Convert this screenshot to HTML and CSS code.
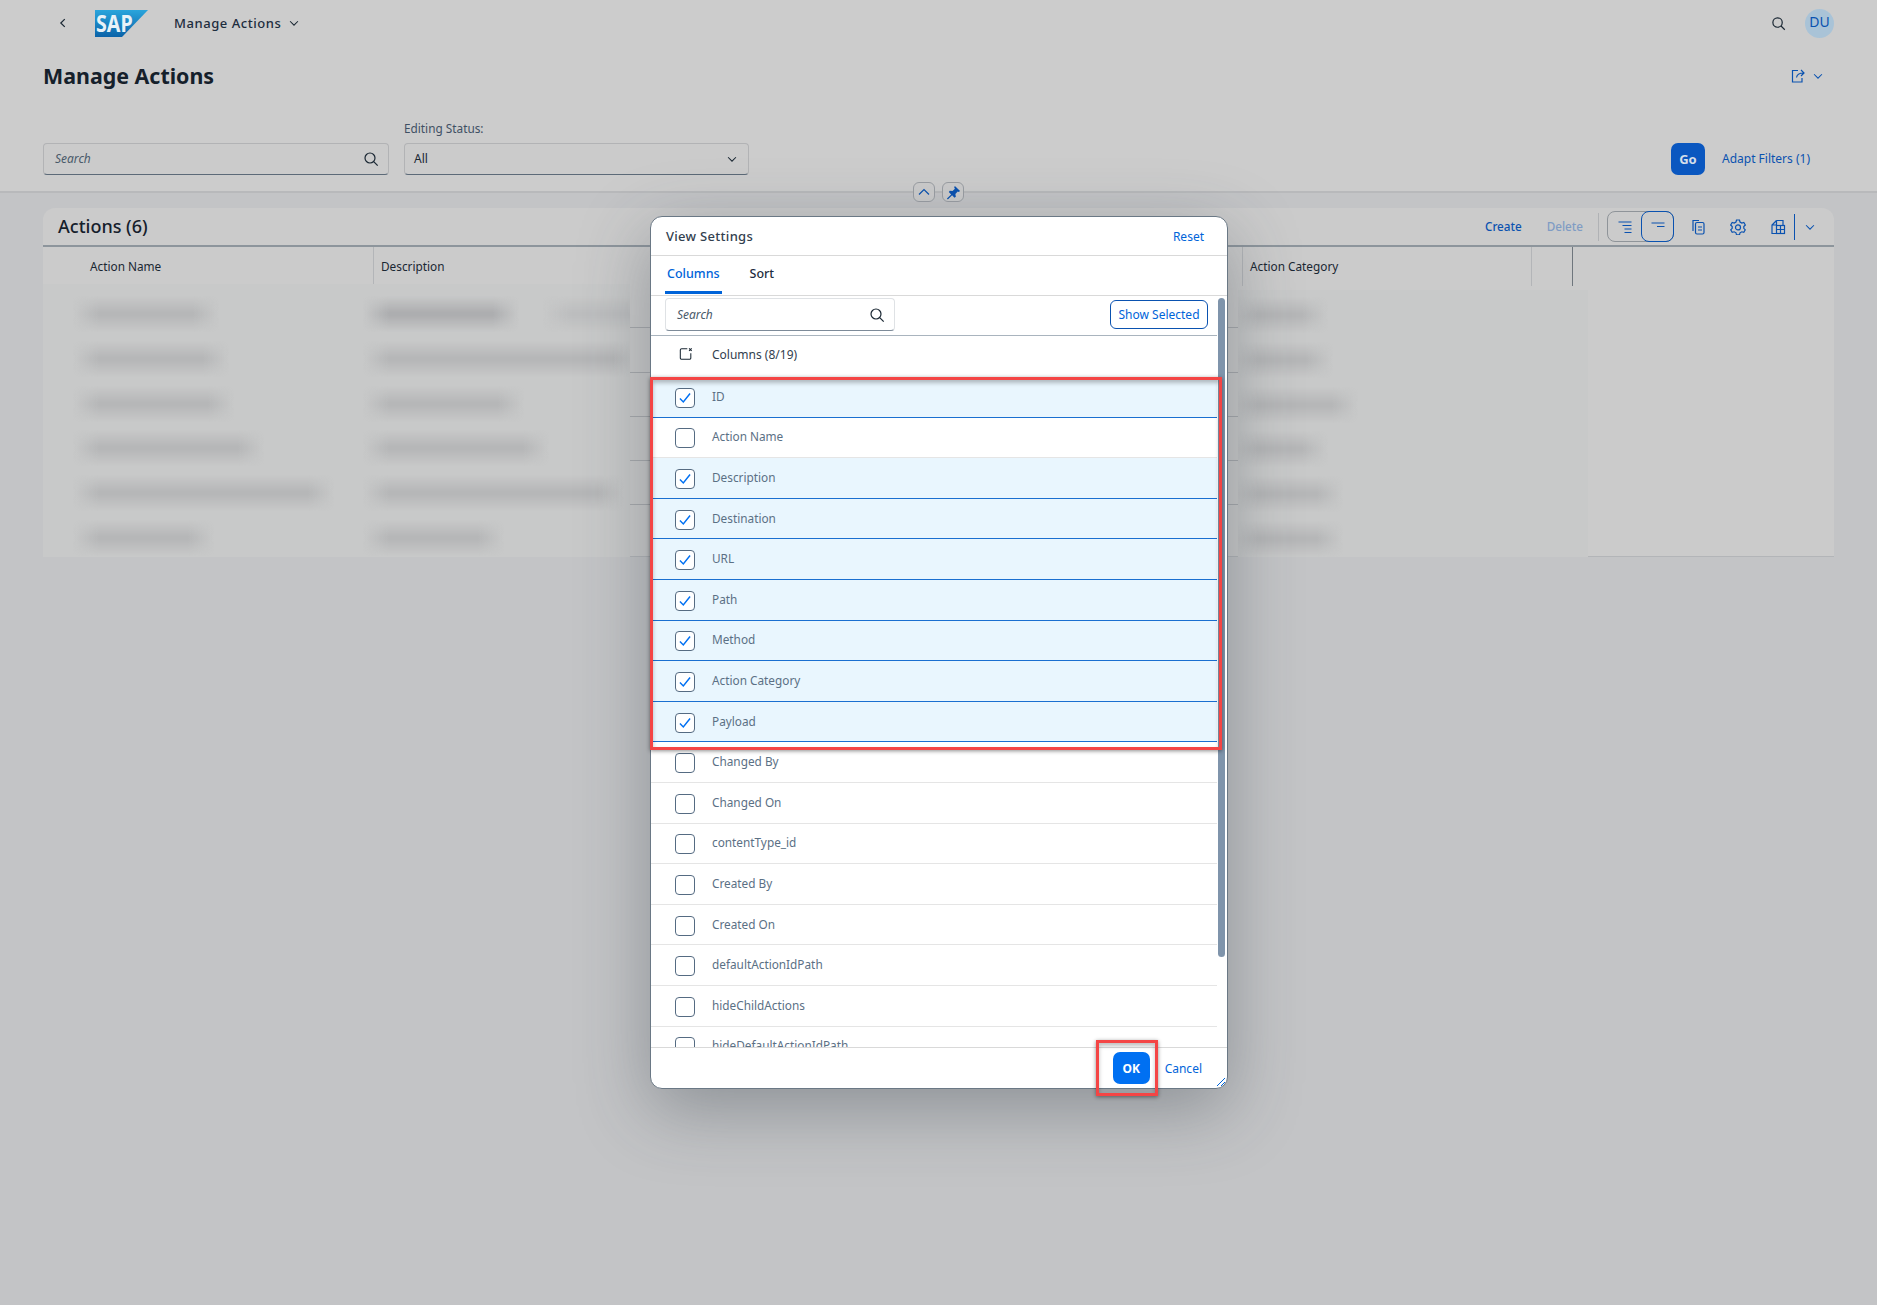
FILE: index.html
```html
<!DOCTYPE html>
<html lang="en">
<head>
  <meta charset="UTF-8" />
  <meta name="viewport" content="width=device-width, initial-scale=1.0" />
  <title>Manage Actions</title>
  <link rel="stylesheet" href="styles.css">
</head>
<body>
  <header class="page-header">
    <div class="shell">
      <svg class="icon back" viewBox="0 0 16 16"><path d="M10 3.500 5.500 8l4.500 4.500"/></svg>
      <svg class="logo" viewBox="0 0 53 27">
        <defs>
          <linearGradient id="sapblue" x1="0" y1="0" x2="0" y2="1">
            <stop offset="0" stop-color="#2aa5dc"/>
            <stop offset="1" stop-color="#0a62a8"/>
          </linearGradient>
        </defs>
        <polygon points="0,0 53,0 27,27 0,27" fill="url(#sapblue)"/>
        <text class="logo-text" transform="translate(1 22) scale(.82 1)">SAP</text>
      </svg>
      <span class="shell-title">Manage Actions</span>
      <svg class="icon chevron" viewBox="0 0 16 16"><path d="M3.500 6 8 10.500 12.500 6"/></svg>
      <span class="spacer"></span>
      <svg class="icon shell-search" viewBox="0 0 16 16"><circle cx="7" cy="7" r="5"/><path d="m10.700 10.700 4 4"/></svg>
      <span class="avatar">DU</span>
    </div>

    <div class="title-row">
      <h1>Manage Actions</h1>
      <span class="spacer"></span>
      <svg class="icon blue share" viewBox="0 0 16 16"><path d="M8 2.500H2.500v11.500h9.500V10"/><path d="M6.500 9.500C7 6.500 9 5 13.500 5M11 2l3 3-3 3"/></svg>
      <svg class="icon blue chevron" viewBox="0 0 16 16"><path d="M3.500 6 8 10.500 12.500 6"/></svg>
    </div>

    <div class="filter-bar">
      <div class="input search-filter">
        <span class="placeholder">Search</span>
        <svg class="icon" viewBox="0 0 16 16"><circle cx="7" cy="7" r="5"/><path d="m10.700 10.700 4 4"/></svg>
      </div>
      <div class="field">
        <label>Editing Status:</label>
        <div class="input">
          <span class="value">All</span>
          <svg class="icon chevron" viewBox="0 0 16 16"><path d="M3.500 6 8 10.500 12.500 6"/></svg>
        </div>
      </div>
      <span class="spacer"></span>
      <button class="go">Go</button>
      <span class="adapt">Adapt Filters (1)</span>
    </div>

    <div class="collapse-btns">
      <span class="round-btn"><svg class="icon blue" viewBox="0 0 16 16"><path d="M3 10.500 8 5.500l5 5"/></svg></span>
      <span class="round-btn"><svg class="pin" viewBox="0 0 16 16"><path d="M9.500 1 15 6.500l-1.500 1-1-.5-2.500 2.500.5 3-1.500 1-2.500-2.500L2 15.500l-1-1 4.500-4.500L3 7.500l1-1.500 3 .5L9.500 4l-.8-1.500z"/></svg></span>
    </div>
  </header>

  <main class="card">
    <div class="toolbar">
      <h2>Actions (6)</h2>
      <span class="spacer"></span>
      <span class="tool-link">Create</span>
      <span class="tool-link disabled">Delete</span>
      <span class="tool-sep"></span>
      <div class="segmented">
        <span class="seg"><svg class="icon blue" viewBox="0 0 16 16"><path d="M1.500 3h13M5.500 6.500h9M7.500 10h7M7.500 13.500h7"/></svg></span>
        <span class="seg active"><svg class="icon blue" viewBox="0 0 16 16"><path d="M1.500 4h13M7 7.500h7.500"/></svg></span>
      </div>
      <svg class="icon blue tool-icon copy" viewBox="0 0 16 16"><path d="M3 12V1.500h6"/><rect x="5.500" y="3.500" width="8.500" height="11.500" rx="1.500"/><path d="M8 8h4M8 11h4"/></svg>
      <svg class="icon blue tool-icon gear" viewBox="0 0 16 16"><path d="M6.500 1h3l.5 2 1.800 1 2-.6 1.500 2.600-1.500 1.500v1.800l1.500 1.500-1.500 2.600-2-.6-1.800 1-.5 2h-3l-.5-2-1.800-1-2 .6L.7 10.800l1.500-1.500V7.500L.7 6l1.500-2.600 2 .6L6 3z"/><circle cx="8" cy="8.400" r="2.500"/></svg>
      <svg class="icon blue tool-icon export" viewBox="0 0 16 16"><path d="M6.500 1.500h6.500v5M6.500 1.500 2 6v8.500h4.500M2 6h4.500V1.500"/><rect x="6.500" y="6.500" width="8" height="8"/><path d="M10.500 6.500v8M6.500 10.500h8"/></svg>
      <span class="tool-bar"></span>
      <svg class="icon blue chevron" viewBox="0 0 16 16"><path d="M3.500 6 8 10.500 12.500 6"/></svg>
    </div>

    <div class="table-head">
      <div class="th first">Action Name</div>
      <div class="th">Description</div>
      <div class="th">Action Category</div>
      <div class="th"></div>
    </div>

    <div class="table-body">
      <div class="row"></div>
      <div class="row"></div>
      <div class="row"></div>
      <div class="row"></div>
      <div class="row"></div>
      <div class="row"></div>
    </div>

    <div class="blur-patch left">
      <div class="blur-row"><i class="bar w110"></i><i class="bar dark w120"></i><i class="bar tail"></i></div>
      <div class="blur-row"><i class="bar w120"></i><i class="bar w240"></i></div>
      <div class="blur-row"><i class="bar w125"></i><i class="bar w125"></i></div>
      <div class="blur-row"><i class="bar w155"></i><i class="bar w150"></i></div>
      <div class="blur-row"><i class="bar w225"></i><i class="bar w225"></i></div>
      <div class="blur-row"><i class="bar w105"></i><i class="bar w105"></i></div>
    </div>
    <div class="blur-patch right">
      <div class="blur-row"><i class="bar w60"></i></div>
      <div class="blur-row"><i class="bar w65"></i></div>
      <div class="blur-row"><i class="bar w90"></i></div>
      <div class="blur-row"><i class="bar w60"></i></div>
      <div class="blur-row"><i class="bar w75"></i></div>
      <div class="blur-row"><i class="bar w75"></i></div>
    </div>
  </main>

  <section class="dialog">
    <div class="dialog-head">
      <span class="dialog-title">View Settings</span>
      <span class="link">Reset</span>
    </div>
    <div class="tabs">
      <span class="tab active">Columns</span>
      <span class="tab">Sort</span>
    </div>
    <div class="dialog-body">
      <div class="list-area">
        <div class="search-row">
          <div class="input white">
            <span class="placeholder">Search</span>
            <svg class="icon" viewBox="0 0 16 16"><circle cx="7" cy="7" r="5"/><path d="m10.700 10.700 4 4"/></svg>
          </div>
          <span class="spacer"></span>
          <button class="show-selected">Show Selected</button>
        </div>
        <div class="list-head">
          <svg class="icon select-all" viewBox="0 0 16 16"><path d="M9.500 2H3a1.500 1.500 0 0 0-1.500 1.500v9A1.500 1.500 0 0 0 3 14h9a1.500 1.500 0 0 0 1.500-1.500V7"/><path d="m11.500 1.500 3 3m0-3-3 3"/></svg>
          <span>Columns (8/19)</span>
        </div>
        <ul class="list">
          <li class="item on"><span class="box"><svg viewBox="0 0 16 16"><path d="m3.500 8.500 3 3 6-7.500"/></svg></span><span class="item-label">ID</span></li>
          <li class="item"><span class="box"></span><span class="item-label">Action Name</span></li>
          <li class="item on"><span class="box"><svg viewBox="0 0 16 16"><path d="m3.500 8.500 3 3 6-7.500"/></svg></span><span class="item-label">Description</span></li>
          <li class="item on"><span class="box"><svg viewBox="0 0 16 16"><path d="m3.500 8.500 3 3 6-7.500"/></svg></span><span class="item-label">Destination</span></li>
          <li class="item on"><span class="box"><svg viewBox="0 0 16 16"><path d="m3.500 8.500 3 3 6-7.500"/></svg></span><span class="item-label">URL</span></li>
          <li class="item on"><span class="box"><svg viewBox="0 0 16 16"><path d="m3.500 8.500 3 3 6-7.500"/></svg></span><span class="item-label">Path</span></li>
          <li class="item on"><span class="box"><svg viewBox="0 0 16 16"><path d="m3.500 8.500 3 3 6-7.500"/></svg></span><span class="item-label">Method</span></li>
          <li class="item on"><span class="box"><svg viewBox="0 0 16 16"><path d="m3.500 8.500 3 3 6-7.500"/></svg></span><span class="item-label">Action Category</span></li>
          <li class="item on"><span class="box"><svg viewBox="0 0 16 16"><path d="m3.500 8.500 3 3 6-7.500"/></svg></span><span class="item-label">Payload</span></li>
          <li class="item"><span class="box"></span><span class="item-label">Changed By</span></li>
          <li class="item"><span class="box"></span><span class="item-label">Changed On</span></li>
          <li class="item"><span class="box"></span><span class="item-label">contentType_id</span></li>
          <li class="item"><span class="box"></span><span class="item-label">Created By</span></li>
          <li class="item"><span class="box"></span><span class="item-label">Created On</span></li>
          <li class="item"><span class="box"></span><span class="item-label">defaultActionIdPath</span></li>
          <li class="item"><span class="box"></span><span class="item-label">hideChildActions</span></li>
          <li class="item"><span class="box"></span><span class="item-label">hideDefaultActionIdPath</span></li>
        </ul>
      </div>
      <div class="scrollbar"><span class="thumb"></span></div>
    </div>
    <div class="dialog-foot">
      <button class="ok">OK</button>
      <span class="link">Cancel</span>
      <svg class="grip" viewBox="0 0 10 10"><path d="M1 9 9 1M5 9l4-4"/></svg>
    </div>
    <div class="mark mark-list"></div>
    <div class="mark mark-ok"></div>
  </section>
</body>
</html>
```

FILE: styles.css
```css
* {
  box-sizing: border-box;
}

body {
  margin: 0;
  height: 1305px;
  overflow: hidden;
  position: relative;
  font-family: "Noto Sans", Arial, sans-serif;
  font-size: 13px;
  color: #1a2733;
  background-color: #c3c4c6;
}

h1, h2, ul {
  margin: 0;
  padding: 0;
}

button {
  font-family: inherit;
  border: none;
  padding: 0;
}

.spacer {
  flex: 1;
}

.icon {
  width: 16px;
  height: 16px;
  flex: none;
  fill: none;
  stroke: #1a2733;
  stroke-width: 1.2;
}

.icon.blue {
  stroke: #0a52b0;
}

.chevron {
  width: 14px;
  height: 14px;
}

/* page header */
.page-header {
  position: relative;
  height: 193px;
  background-color: #cccccc;
  border-bottom: 2px solid #b8b9bb;
}

.shell {
  display: flex;
  align-items: center;
  height: 46px;
  padding: 0 43px 0 56px;
}

.back {
  width: 14px;
  height: 14px;
  stroke-width: 1.4;
}

.logo {
  width: 53px;
  height: 27px;
  margin-left: 25px;
}

.logo-text {
  font-size: 24px;
  font-weight: 700;
  fill: #e8f2f8;
}

.shell-title {
  margin-left: 26px;
  font-size: 13px;
  font-weight: 500;
  letter-spacing: 0.55px;
  color: #1d2d3e;
}

.shell-title + .chevron {
  margin-left: 6px;
}

.shell-search {
  margin-right: 19px;
  width: 15px;
  height: 15px;
  stroke-width: 1.3;
}

.avatar {
  width: 29px;
  height: 29px;
  border-radius: 50%;
  background-color: #a9c3d7;
  color: #0a52b0;
  font-size: 14px;
  text-align: center;
  line-height: 26px;
}

.title-row {
  display: flex;
  align-items: center;
  height: 60px;
  padding: 0 52px 0 43px;
}

h1 {
  margin-top: -2px;
  font-size: 21.4px;
  font-weight: 700;
  color: #15202b;
}

.share {
  margin-right: 5px;
}

.filter-bar {
  display: flex;
  align-items: flex-end;
  gap: 15px;
  height: 69px;
  padding: 0 67px 0 43px;
}

.input {
  display: flex;
  align-items: center;
  justify-content: space-between;
  width: 345px;
  height: 32px;
  padding: 0 9px 0 9px;
  background-color: #cbcbcb;
  border: 1px solid #b2b3b5;
  border-bottom: 1.5px solid #5c6a78;
  border-radius: 4px;
}

.input.search-filter {
  width: 346px;
  padding-left: 11px;
}

.placeholder {
  font-size: 12px;
  font-style: italic;
  color: #4a5a6a;
}

.value {
  font-size: 12px;
}

.filter-bar .placeholder,
.filter-bar .value {
  margin-top: -2px;
}

.field label {
  display: block;
  margin-bottom: 7px;
  font-size: 11.8px;
  color: #3f5064;
}

.go {
  width: 34px;
  height: 32px;
  margin-left: auto;
  padding-bottom: 1px;
  border-radius: 7px;
  background-color: #0a57c0;
  color: #d5dfea;
  font-size: 13px;
  font-weight: 700;
}

.adapt {
  line-height: 30px;
  margin: 0 0 1px 2px;
  font-size: 12px;
  color: #0a52b0;
}

.collapse-btns {
  position: absolute;
  left: 913px;
  top: 182px;
  display: flex;
  gap: 7px;
}

.round-btn {
  display: flex;
  align-items: center;
  justify-content: center;
  width: 22px;
  height: 20px;
  background-color: #cbcbcb;
  border: 1px solid #9a9ea3;
  border-radius: 6px;
}

.pin {
  width: 15px;
  height: 15px;
  fill: #0a52b0;
}

/* table card */
.card {
  position: relative;
  height: 349px;
  margin: 15px 43px 0;
  background-color: #cbcbcb;
  border-radius: 12px 12px 0 0;
  border-bottom: 1px solid #b3b5b8;
}

.toolbar {
  display: flex;
  align-items: center;
  height: 39px;
  padding: 0 17px 0 15px;
  border-bottom: 2px solid #8d959c;
}

h2 {
  margin-top: -2px;
  font-size: 18px;
  font-weight: 500;
  color: #15202b;
}

.tool-link {
  margin: -2px 0 0 25px;
  font-size: 11.7px;
  font-weight: 500;
  color: #0a52b0;
}

.tool-link.disabled {
  color: #7f9cc4;
}

.tool-sep {
  width: 1px;
  height: 28px;
  margin: 0 8px 0 15px;
  background-color: #b0b2b5;
}

.segmented {
  display: flex;
  width: 67px;
  height: 31px;
  margin-right: 16px;
  border: 1px solid #8f9499;
  border-radius: 8px;
}

.seg {
  display: flex;
  align-items: center;
  justify-content: center;
  flex: 1;
}

.seg.active {
  flex: none;
  width: 33px;
  margin: -1px;
  border: 1.5px solid #0a52b0;
  border-radius: 8px;
}

.tool-icon {
  margin-left: 24px;
}

.copy {
  margin-left: 0;
}

.tool-bar {
  width: 1px;
  height: 26px;
  margin: 0 8px;
  background-color: #0a52b0;
}

.table-head {
  display: grid;
  grid-template-columns: 330px 869px 289px 42px;
  width: 1530px;
  height: 37px;
}

.th {
  padding-left: 7px;
  line-height: 39px;
  font-size: 11.8px;
  color: #1a2733;
  border-left: 1px solid #b3b5b8;
}

.th.first {
  padding-left: 47px;
  border-left: none;
}

.th:last-child {
  border-right: 1px solid #6f767d;
}

.table-body {
  width: 1530px;
}

.row {
  height: 44.3px;
  border-bottom: 1px solid #a9abae;
}

.row:last-child {
  border-bottom: none;
}

.blur-patch {
  position: absolute;
  top: 76px;
  height: 273px;
  padding-top: 8px;
  overflow: hidden;
  background-color: #c8c9c9;
}

.blur-patch.left {
  left: 0;
  width: 587px;
}

.blur-patch.right {
  top: 82px;
  height: 267px;
  left: 1195px;
  width: 350px;
  padding-top: 3px;
}

.blur-row {
  display: flex;
  align-items: center;
  height: 44.7px;
}

/* smeared text in the table, soft on all four sides */
.bar {
  --smear: #b6b7b8;
  display: block;
  box-sizing: content-box;
  height: 36px;
  padding: 0 18px;
  background: linear-gradient(90deg, transparent, var(--smear) 26px, var(--smear) calc(100% - 26px), transparent);
  -webkit-mask-image: linear-gradient(180deg, transparent, #000 45%, #000 55%, transparent);
  mask-image: linear-gradient(180deg, transparent, #000 45%, #000 55%, transparent);
}

.bar.dark {
  --smear: #adaeb0;
}

.left .bar {
  margin-left: 30px;
}

.left .bar + .bar {
  position: absolute;
  left: 290px;
  margin-left: 30px;
}

.left .bar.tail {
  --smear: #bdbebf;
  left: 470px;
  width: 120px;
}

.right .bar {
  margin-left: -6px;
}

.w60 { width: 60px; }
.w65 { width: 65px; }
.w75 { width: 75px; }
.w90 { width: 90px; }
.w105 { width: 105px; }
.w110 { width: 110px; }
.w120 { width: 120px; }
.w125 { width: 125px; }
.w150 { width: 150px; }
.w155 { width: 155px; }
.w225 { width: 225px; }
.w240 { width: 240px; }

/* dialog */
.dialog {
  position: absolute;
  left: 650px;
  top: 216px;
  display: flex;
  flex-direction: column;
  width: 578px;
  height: 873px;
  background-color: #fff;
  border: 1px solid #6a7885;
  border-radius: 12px;
  box-shadow: 0 20px 70px rgba(50, 60, 70, 0.38);
}

.dialog-head {
  display: flex;
  align-items: center;
  justify-content: space-between;
  flex: none;
  height: 39px;
  padding: 0 23px 0 15px;
  border-bottom: 1px solid #d9d9d9;
}

.dialog-title {
  font-size: 13px;
  font-weight: 500;
  letter-spacing: 0.3px;
  color: #32404e;
}

.link {
  font-size: 12px;
  color: #0064d9;
}

.tabs {
  display: flex;
  flex: none;
  gap: 26px;
  height: 40px;
  padding-left: 14px;
  border-bottom: 1px solid #d9d9d9;
}

.tab {
  padding: 0 2px;
  line-height: 35px;
  font-size: 12.5px;
  font-weight: 500;
  color: #1d2d3e;
  height: 38px;
}

.tab.active {
  color: #0064d9;
  border-bottom: 3px solid #0064d9;
}

.dialog-body {
  display: flex;
  flex: 1;
  min-height: 0;
}

.list-area {
  display: flex;
  flex-direction: column;
  flex: 1;
  min-width: 0;
  overflow: hidden;
}

.search-row {
  display: flex;
  align-items: center;
  flex: none;
  height: 40px;
  padding: 0 9px 2px 14px;
  border-bottom: 1px solid #a9b4be;
}

.input.white {
  width: 230px;
  height: 33px;
  padding-left: 11px;
  background-color: #fff;
  border-color: #dfe2e5;
  border-bottom-color: #7d8b99;
}

.show-selected {
  width: 98px;
  height: 29px;
  background-color: #fff;
  border: 1px solid #0a52b0;
  border-radius: 6px;
  font-size: 12px;
  color: #0064d9;
}

.list-head {
  display: flex;
  align-items: center;
  flex: none;
  height: 41px;
  padding: 0 0 5px 28px;
  font-size: 12px;
  color: #32404e;
}

.select-all {
  width: 14px;
  height: 14px;
  margin-right: 19px;
}

.list {
  list-style-type: none;
}

.item {
  display: flex;
  align-items: center;
  height: 40.6px;
  padding-left: 24px;
  border-bottom: 1px solid #e5e5e5;
}

.item.on {
  background-color: #e9f6fe;
  border-bottom-color: #1a6fd0;
}

.box {
  flex: none;
  width: 20px;
  height: 20px;
  margin: 2px 17px 0 0;
  background-color: #fff;
  border: 1px solid #556b82;
  border-radius: 4px;
}

.box svg {
  display: block;
  width: 18px;
  height: 18px;
  fill: none;
  stroke: #0070f2;
  stroke-width: 1.3;
}

.item-label {
  margin-top: -2px;
  font-size: 11.8px;
  color: #5b7085;
}

.scrollbar {
  flex: none;
  width: 10px;
  padding: 2px 2px 0 1px;
}

.thumb {
  display: block;
  height: 659px;
  background-color: #7f94ab;
  border-radius: 4px;
}

.dialog-foot {
  position: relative;
  display: flex;
  align-items: center;
  justify-content: flex-end;
  flex: none;
  gap: 15px;
  height: 41px;
  padding-right: 25px;
  border-top: 1px solid #d9d9d9;
}

.ok {
  width: 37px;
  height: 32px;
  background-color: #0070f2;
  border-radius: 7px;
  color: #fff;
  font-size: 12px;
  font-weight: 700;
}

.grip {
  position: absolute;
  right: 1px;
  bottom: 1px;
  width: 10px;
  height: 10px;
  fill: none;
  stroke: #0064d9;
}

.mark {
  position: absolute;
  border: 3px solid #f44545;
  box-shadow: 0 1px 4px rgba(0, 0, 0, 0.45), inset 0 3px 4px rgba(0, 0, 0, 0.25);
}

.mark-list {
  left: -1px;
  top: 160px;
  width: 572px;
  height: 373px;
}

.mark-ok {
  left: 445px;
  top: 823px;
  width: 62px;
  height: 56px;
}
```
